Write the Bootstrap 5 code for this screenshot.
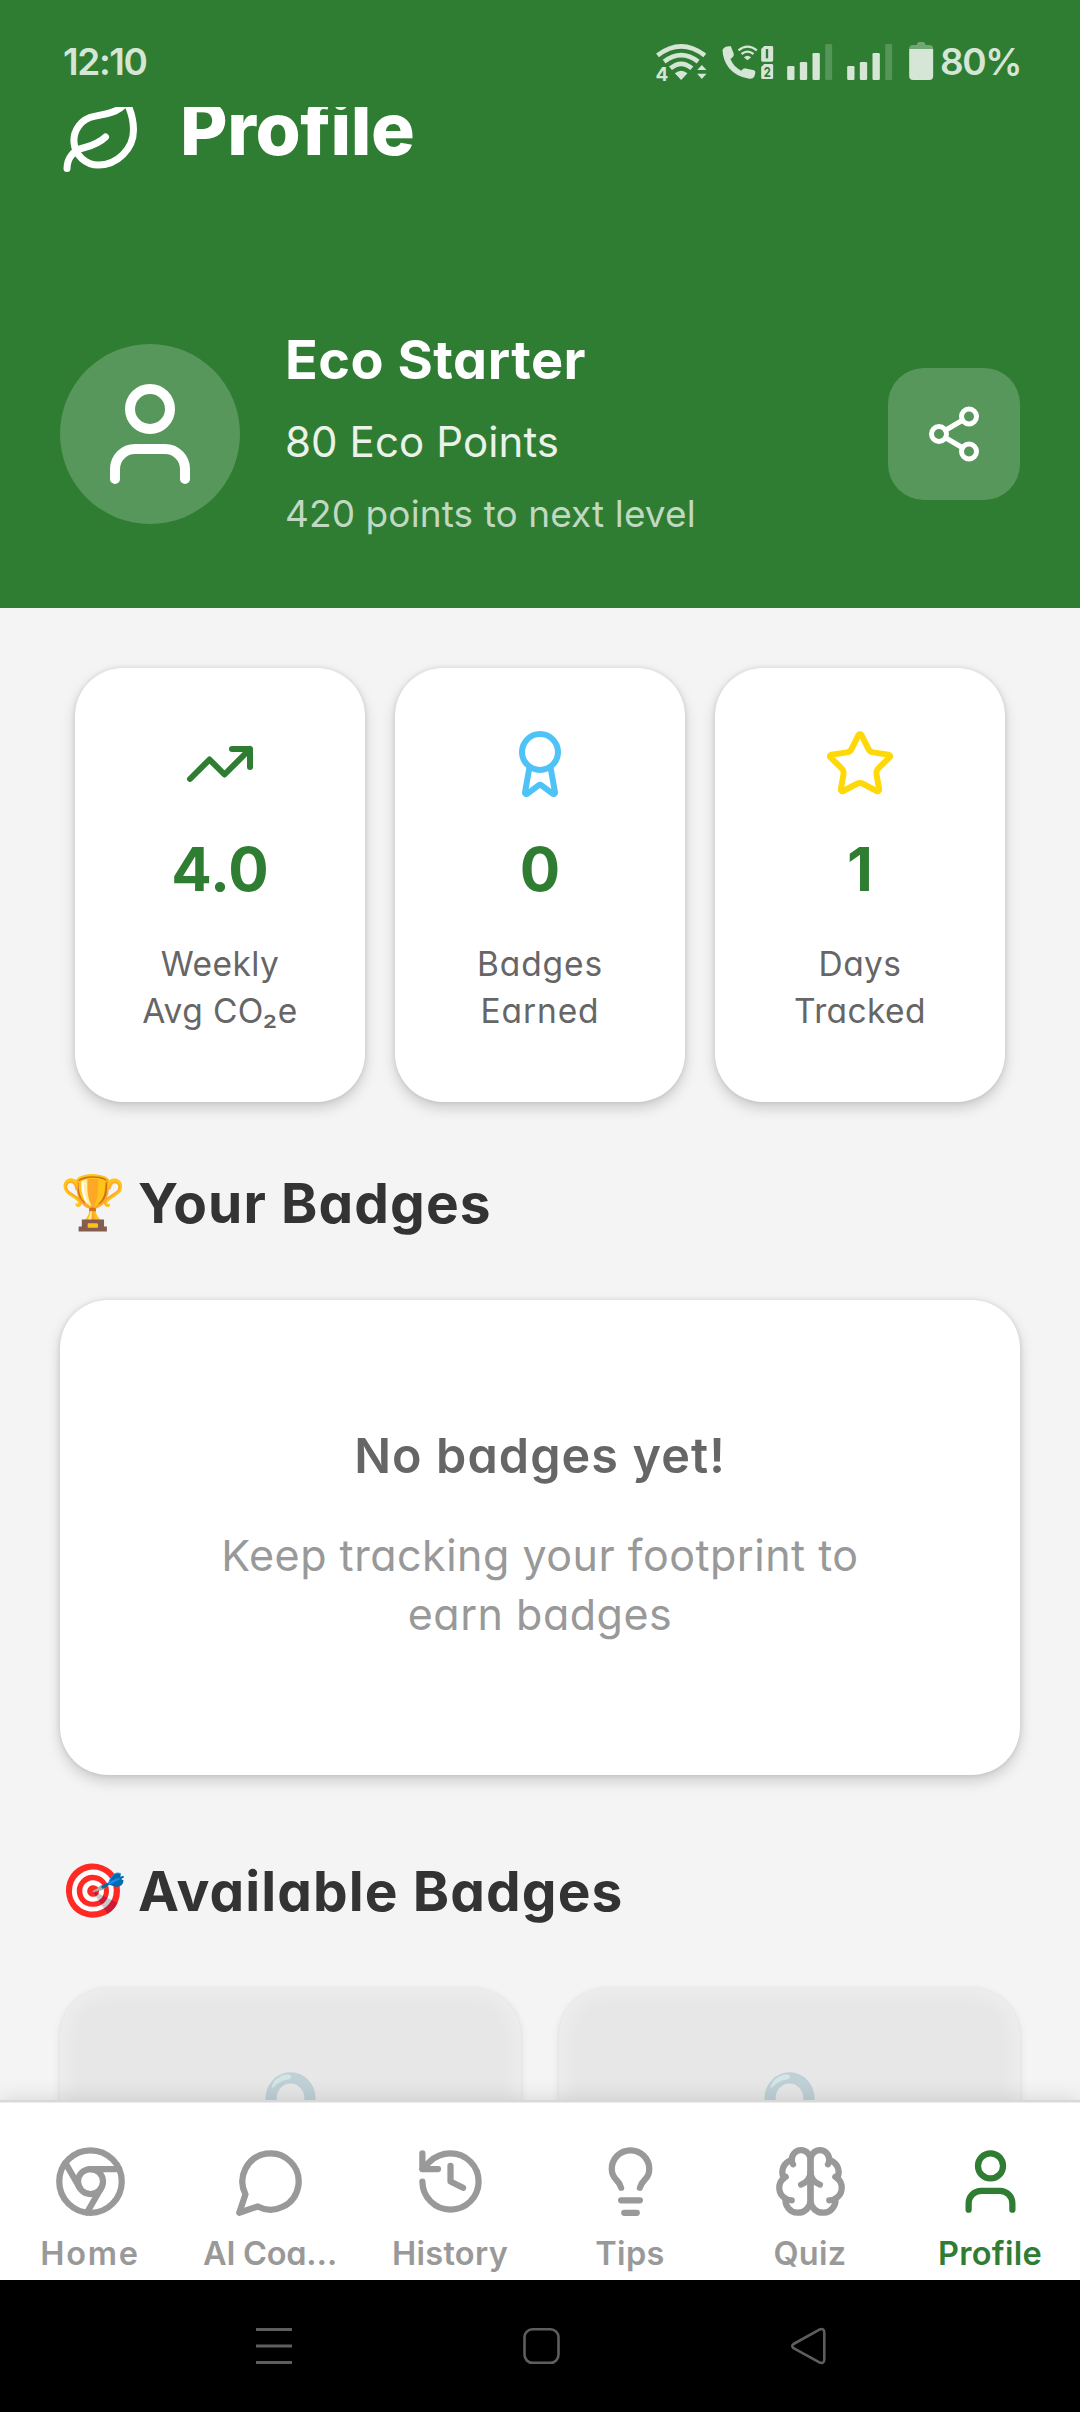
<!DOCTYPE html>
<html lang="en">
<head>
<meta charset="utf-8">
<meta name="viewport" content="width=device-width, initial-scale=1">
<title>Profile</title>
<link rel="stylesheet" href="https://cdn.jsdelivr.net/npm/bootstrap@5.3.0/dist/css/bootstrap.min.css">
<style>
  :root { --eco: #2f7d32; }
  body { font-family: Inter, "Open Sans", sans-serif; font-feature-settings: "cv11"; background: #f4f4f4; width: 1080px; height: 2412px; overflow: hidden; color: #333; }
  .ico { fill: none; stroke: currentColor; stroke-width: 2; stroke-linecap: round; stroke-linejoin: round; flex: none; display: block; }
  .status { height: 107px; padding: 16px 59px 0 63px; background: var(--eco); color: #d5e5d6; font-size: 37px; font-weight: 600; letter-spacing: -1.4px; flex: none; }
  .status svg { flex: none; margin-right: 3px; }
  .screen { height: 1996px; overflow: hidden; flex: none; }
  .hero { background: var(--eco); color: #fff; padding: 0 60px 64px; height: 513px; }
  .hero-title { margin-top: -12px; gap: 36px; height: 84px; }
  .hero-title h1 { font-size: 73px; line-height: 84px; font-weight: 800; margin: 0 0 17px; letter-spacing: -.4px; }
  .hero-user { margin-top: 145px; height: 220px; gap: 45px; }
  .avatar { width: 180px; height: 180px; background: #57975b; }
  .level { font-size: 54px; font-weight: 700; line-height: 72px; letter-spacing: .5px; }
  .pts { font-size: 42px; line-height: 92px; letter-spacing: .1px; color: #eaf2ea; }
  .next { font-size: 37px; line-height: 52px; letter-spacing: .1px; color: #c1d8c2; margin-bottom: 4px; }
  .share { width: 132px; height: 132px; border-radius: 36px; background: #57975b; border: 0; color: #fff; }
  .panel { background: #fff; border: 0; border-radius: 48px; box-shadow: 0 6px 14px rgba(0,0,0,.17), 0 0 5px rgba(0,0,0,.11); }
  .stats { padding: 60px 75px 0; gap: 30px; }
  .stat { height: 434px; padding-top: 60px; flex: 1 1 0; align-items: center; text-align: center; }
  .num { font-size: 60px; line-height: 90px; font-weight: 700; color: var(--eco); margin-top: 24px; }
  .lbl { font-size: 33.5px; line-height: 47px; color: #666; letter-spacing: .4px; margin-top: 27px; }
  .wide-ls { letter-spacing: .9px; }
  .sec { padding: 0 60px; }
  .sec h2 { font-size: 55px; font-weight: 700; line-height: 80px; margin: 0; letter-spacing: 1.1px; }
  .emo { width: 78px; font-size: 53px; font-family: "Noto Color Emoji", sans-serif; letter-spacing: 0; font-weight: 400; }
  .empty { height: 475px; margin-top: 57px; padding-top: 120px; text-align: center; }
  .empty h3 { font-size: 48.5px; line-height: 72px; font-weight: 600; color: #666; letter-spacing: 1.1px; margin: 0 0 34px; }
  .empty p { font-size: 43px; line-height: 59px; color: #999; letter-spacing: .5px; margin: 0; }
  .locked-row { gap: 38px; margin-top: 57px; }
  .locked { flex: 1 1 0; height: 400px; border-radius: 48px; border: 0; background: #e7e7e7; box-shadow: inset 0 0 20px 5px rgba(255,255,255,.35), 0 4px 12px rgba(0,0,0,.06), 0 0 4px rgba(0,0,0,.07); text-align: center; padding-top: 81px; }
  .locked span { font-family: "Noto Color Emoji", sans-serif; font-size: 94px; line-height: 100px; opacity: .4; }
  .tabs { height: 177px; background: #fff; flex: none; overflow: hidden; color: #999; }
  .tabs-wrap { box-shadow: 0 -1px 0 #ececec, 0 -3px 0 #d8d8d8, 0 -4px 20px rgba(0,0,0,.12); z-index: 2; position: relative; }
  .tab { width: 180px; padding-top: 41px; color: inherit; text-decoration: none; font-size: 32.500px; font-weight: 600; line-height: 40px; letter-spacing: .3px; }
  .tab svg { margin-bottom: 15px; }
  .tab.on { color: var(--eco); }
  .sysbar { height: 132px; background: #000; flex: none; padding: 0 253px 0 255px; }
</style>
<script src="https://cdn.jsdelivr.net/npm/bootstrap@5.3.0/dist/js/bootstrap.bundle.min.js"></script>
</head>
<body class="d-flex flex-column m-0">
<div class="status d-flex align-items-center">
  <span class="me-auto">12:10</span>
  <svg width="317" height="75" viewBox="0 12 950 225" fill="#d5e5d6">
    <g fill="none" stroke="#d5e5d6" stroke-width="14"><path d="M112 106Q183 52 254 106M132 125Q183 86 234 125M151 145Q183 118 215 145"/></g>
    <path d="M164 160Q183 144 202 160L183 180ZM231 150l14-15 14 15ZM231 161h28l-14 16Z"/>
    <text x="106" y="183" font-size="57" font-weight="700" letter-spacing="0">4</text>
    <path d="M311 84Q318 77 332 79L341 102Q342 109 331 117Q340 140 363 152Q372 142 380 146L402 151Q407 154 405 161L402 170Q399 177 387 176Q350 172 327 145Q308 120 307 90Z"/>
    <g fill="none" stroke="#d5e5d6" stroke-width="7"><path d="M355 91Q382 69 410 91M364 102Q382 88 400 102"/></g>
    <path d="M371 112Q382 103 393 112L382 121Z"/>
    <path d="M432 78h23q4 0 4 4v39q0 4-4 4h-28q-4 0-4-4V87zM432 132h23q4 0 4 4v37q0 4-4 4h-28q-4 0-4-4v-32z"/>
    <path d="M437 87h7v28h-7z" fill="#2f7d32"/>
    <text x="431" y="171" font-size="41" font-weight="700" fill="#2f7d32" textLength="20" lengthAdjust="spacingAndGlyphs">2</text>
    <rect x="501" y="138" width="22" height="42" rx="4"/><rect x="539" y="126" width="22" height="54" rx="4"/><rect x="577" y="99" width="22" height="81" rx="4"/><rect x="615" y="72" width="21" height="108" rx="4" opacity=".23"/>
    <rect x="681" y="138" width="22" height="42" rx="4"/><rect x="719" y="126" width="22" height="54" rx="4"/><rect x="757" y="99" width="22" height="81" rx="4"/><rect x="795" y="72" width="21" height="108" rx="4" opacity=".23"/>
    <path d="M867 87q0-12 12-12h11q1-9 8-9h10q7 0 8 9h11q12 0 12 12z" opacity=".4"/>
    <path d="M867 87h72v81q0 12-12 12h-48q-12 0-12-12z"/>
  </svg>
  <span>80%</span>
</div>

<main class="screen">
  <header class="hero">
    <div class="hero-title d-flex align-items-center">
      <svg class="ico" width="84" height="84" viewBox="0 0 24 24"><path d="M11 20A7 7 0 0 1 9.8 6.1C15.5 5 17 4.48 19 2c1 2 2 4.18 2 8 0 5.5-4.78 10-10 10Z"/><path d="M2 21c0-3 1.85-5.36 5.08-6C9.5 14.52 12 13 13 12"/></svg>
      <h1>Profile</h1>
    </div>
    <div class="hero-user d-flex align-items-center">
      <div class="avatar rounded-circle d-flex align-items-center justify-content-center flex-shrink-0">
        <svg class="ico" width="120" height="120" viewBox="0 0 24 24"><path d="M19 21v-2a4 4 0 0 0-4-4H9a4 4 0 0 0-4 4v2"/><circle cx="12" cy="7" r="4"/></svg>
      </div>
      <div class="flex-grow-1">
        <div class="level">Eco Starter</div>
        <div class="pts">80 Eco Points</div>
        <div class="next">420 points to next level</div>
      </div>
      <button class="share btn p-0 d-flex align-items-center justify-content-center" aria-label="Share">
        <svg class="ico" width="60" height="60" viewBox="0 0 24 24"><circle cx="18" cy="5" r="3"/><circle cx="6" cy="12" r="3"/><circle cx="18" cy="19" r="3"/><path d="M8.59 13.51l6.83 3.98M15.41 6.51l-6.82 3.98"/></svg>
      </button>
    </div>
  </header>

  <section class="stats d-flex">
    <div class="panel card stat">
      <svg class="ico" style="color:#2f7d32" width="72" height="72" viewBox="0 0 24 24"><path d="M22 7l-8.500 8.500-5-5L2 17M16 7h6v6"/></svg>
      <div class="num">4.0</div>
      <div class="lbl">Weekly<br>Avg CO₂e</div>
    </div>
    <div class="panel card stat">
      <svg class="ico" style="color:#4fc3f7" width="72" height="72" viewBox="0 0 24 24"><path d="m15.477 12.89 1.515 8.526a.5.5 0 0 1-.81.47l-3.58-2.687a1 1 0 0 0-1.197 0l-3.586 2.686a.5.5 0 0 1-.81-.469l1.514-8.526"/><circle cx="12" cy="8" r="6"/></svg>
      <div class="num">0</div>
      <div class="lbl wide-ls">Badges<br>Earned</div>
    </div>
    <div class="panel card stat">
      <svg class="ico" style="color:#ffd80a" width="72" height="72" viewBox="0 0 24 24"><path d="M11.525 2.295a.53.53 0 0 1 .95 0l2.310 4.679a2.123 2.123 0 0 0 1.595 1.160l5.166.756a.53.53 0 0 1 .294.904l-3.736 3.638a2.123 2.123 0 0 0-.611 1.878l.882 5.140a.53.53 0 0 1-.771.560l-4.618-2.428a2.122 2.122 0 0 0-1.973 0L6.396 21.010a.53.53 0 0 1-.770-.560l.881-5.139a2.122 2.122 0 0 0-.611-1.879L2.160 9.795a.53.53 0 0 1 .294-.906l5.165-.755a2.122 2.122 0 0 0 1.597-1.160z"/></svg>
      <div class="num">1</div>
      <div class="lbl">Days<br>Tracked</div>
    </div>
  </section>

  <section class="sec" style="padding-top:61px">
    <h2 class="d-flex"><span class="emo">🏆</span>Your Badges</h2>
    <div class="panel empty">
      <h3>No badges yet!</h3>
      <p>Keep tracking your footprint to<br>earn badges</p>
    </div>
  </section>

  <section class="sec" style="padding-top:76px">
    <h2 class="d-flex"><span class="emo">🎯</span>Available Badges</h2>
    <div class="locked-row d-flex">
      <div class="locked"><span>🔒</span></div>
      <div class="locked"><span>🔒</span></div>
    </div>
  </section>
</main>

<div class="tabs-wrap">
<nav class="tabs d-flex">
  <a class="tab d-flex flex-column align-items-center" style="letter-spacing:1.800px"><svg class="ico" width="75" height="75" viewBox="0 0 24 24"><circle cx="12" cy="12" r="10"/><circle cx="12" cy="12" r="4"/><path d="M21.170 8H12M3.950 6.060L8.540 14M10.880 21.940L15.460 14"/></svg>Home</a>
  <a class="tab d-flex flex-column align-items-center" style="letter-spacing:-.3px"><svg class="ico" width="75" height="75" viewBox="0 0 24 24"><path d="M7.900 20A9 9 0 1 0 4 16.100L2 22Z"/></svg>AI Coa…</a>
  <a class="tab d-flex flex-column align-items-center"><svg class="ico" width="75" height="75" viewBox="0 0 24 24"><path d="M3 12a9 9 0 1 0 9-9 9.750 9.750 0 0 0-6.740 2.740L3 8"/><path d="M3 3v5h5M12 7v5l4 2"/></svg>History</a>
  <a class="tab d-flex flex-column align-items-center"><svg class="ico" width="75" height="75" viewBox="0 0 24 24"><path d="M15 14c.2-1 .7-1.700 1.500-2.500 1-.9 1.500-2.200 1.500-3.500A6 6 0 0 0 6 8c0 1 .2 2.200 1.500 3.500.7.7 1.300 1.500 1.500 2.500M9 18h6M10 22h4"/></svg>Tips</a>
  <a class="tab d-flex flex-column align-items-center"><svg class="ico" width="75" height="75" viewBox="0 0 24 24"><path d="M12 5a3 3 0 1 0-5.997.125 4 4 0 0 0-2.526 5.770 4 4 0 0 0 .556 6.588A4 4 0 1 0 12 18Z"/><path d="M12 5a3 3 0 1 1 5.997.125 4 4 0 0 1 2.526 5.770 4 4 0 0 1-.556 6.588A4 4 0 1 1 12 18Z"/><path d="M15 13a4.500 4.500 0 0 1-3-4 4.500 4.500 0 0 1-3 4M17.599 6.500a3 3 0 0 0 .399-1.375M6.003 5.125A3 3 0 0 0 6.401 6.500M3.477 10.896a4 4 0 0 1 .585-.396M19.938 10.500a4 4 0 0 1 .585.396M6 18a4 4 0 0 1-1.967-.516M19.967 17.484A4 4 0 0 1 18 18"/></svg>Quiz</a>
  <a class="tab on d-flex flex-column align-items-center"><svg class="ico" width="75" height="75" viewBox="0 0 24 24"><path d="M19 21v-2a4 4 0 0 0-4-4H9a4 4 0 0 0-4 4v2"/><circle cx="12" cy="7" r="4"/></svg>Profile</a>
</nav>
</div>

<div class="sysbar d-flex align-items-center justify-content-between">
  <svg width="38" height="40" viewBox="0 0 38 40" fill="none" stroke="#5e5e5e" stroke-width="3"><path d="M1 3.500h36M1 20h36M1 36.500h36"/></svg>
  <svg width="40" height="40" viewBox="0 0 40 40" fill="none" stroke="#5e5e5e" stroke-width="2.600"><rect x="3.500" y="3.300" width="34" height="33.500" rx="8"/></svg>
  <svg width="38" height="40" viewBox="0 0 38 40" fill="none" stroke="#5e5e5e" stroke-width="2.600" stroke-linejoin="round"><path d="M4.500 18L30 3.800Q35.300 1.500 35.300 6.500V33.500Q35.300 38.500 30 36.200L4.500 22.200Q2 20 4.500 18Z"/></svg>
</div>
</body>
</html>
